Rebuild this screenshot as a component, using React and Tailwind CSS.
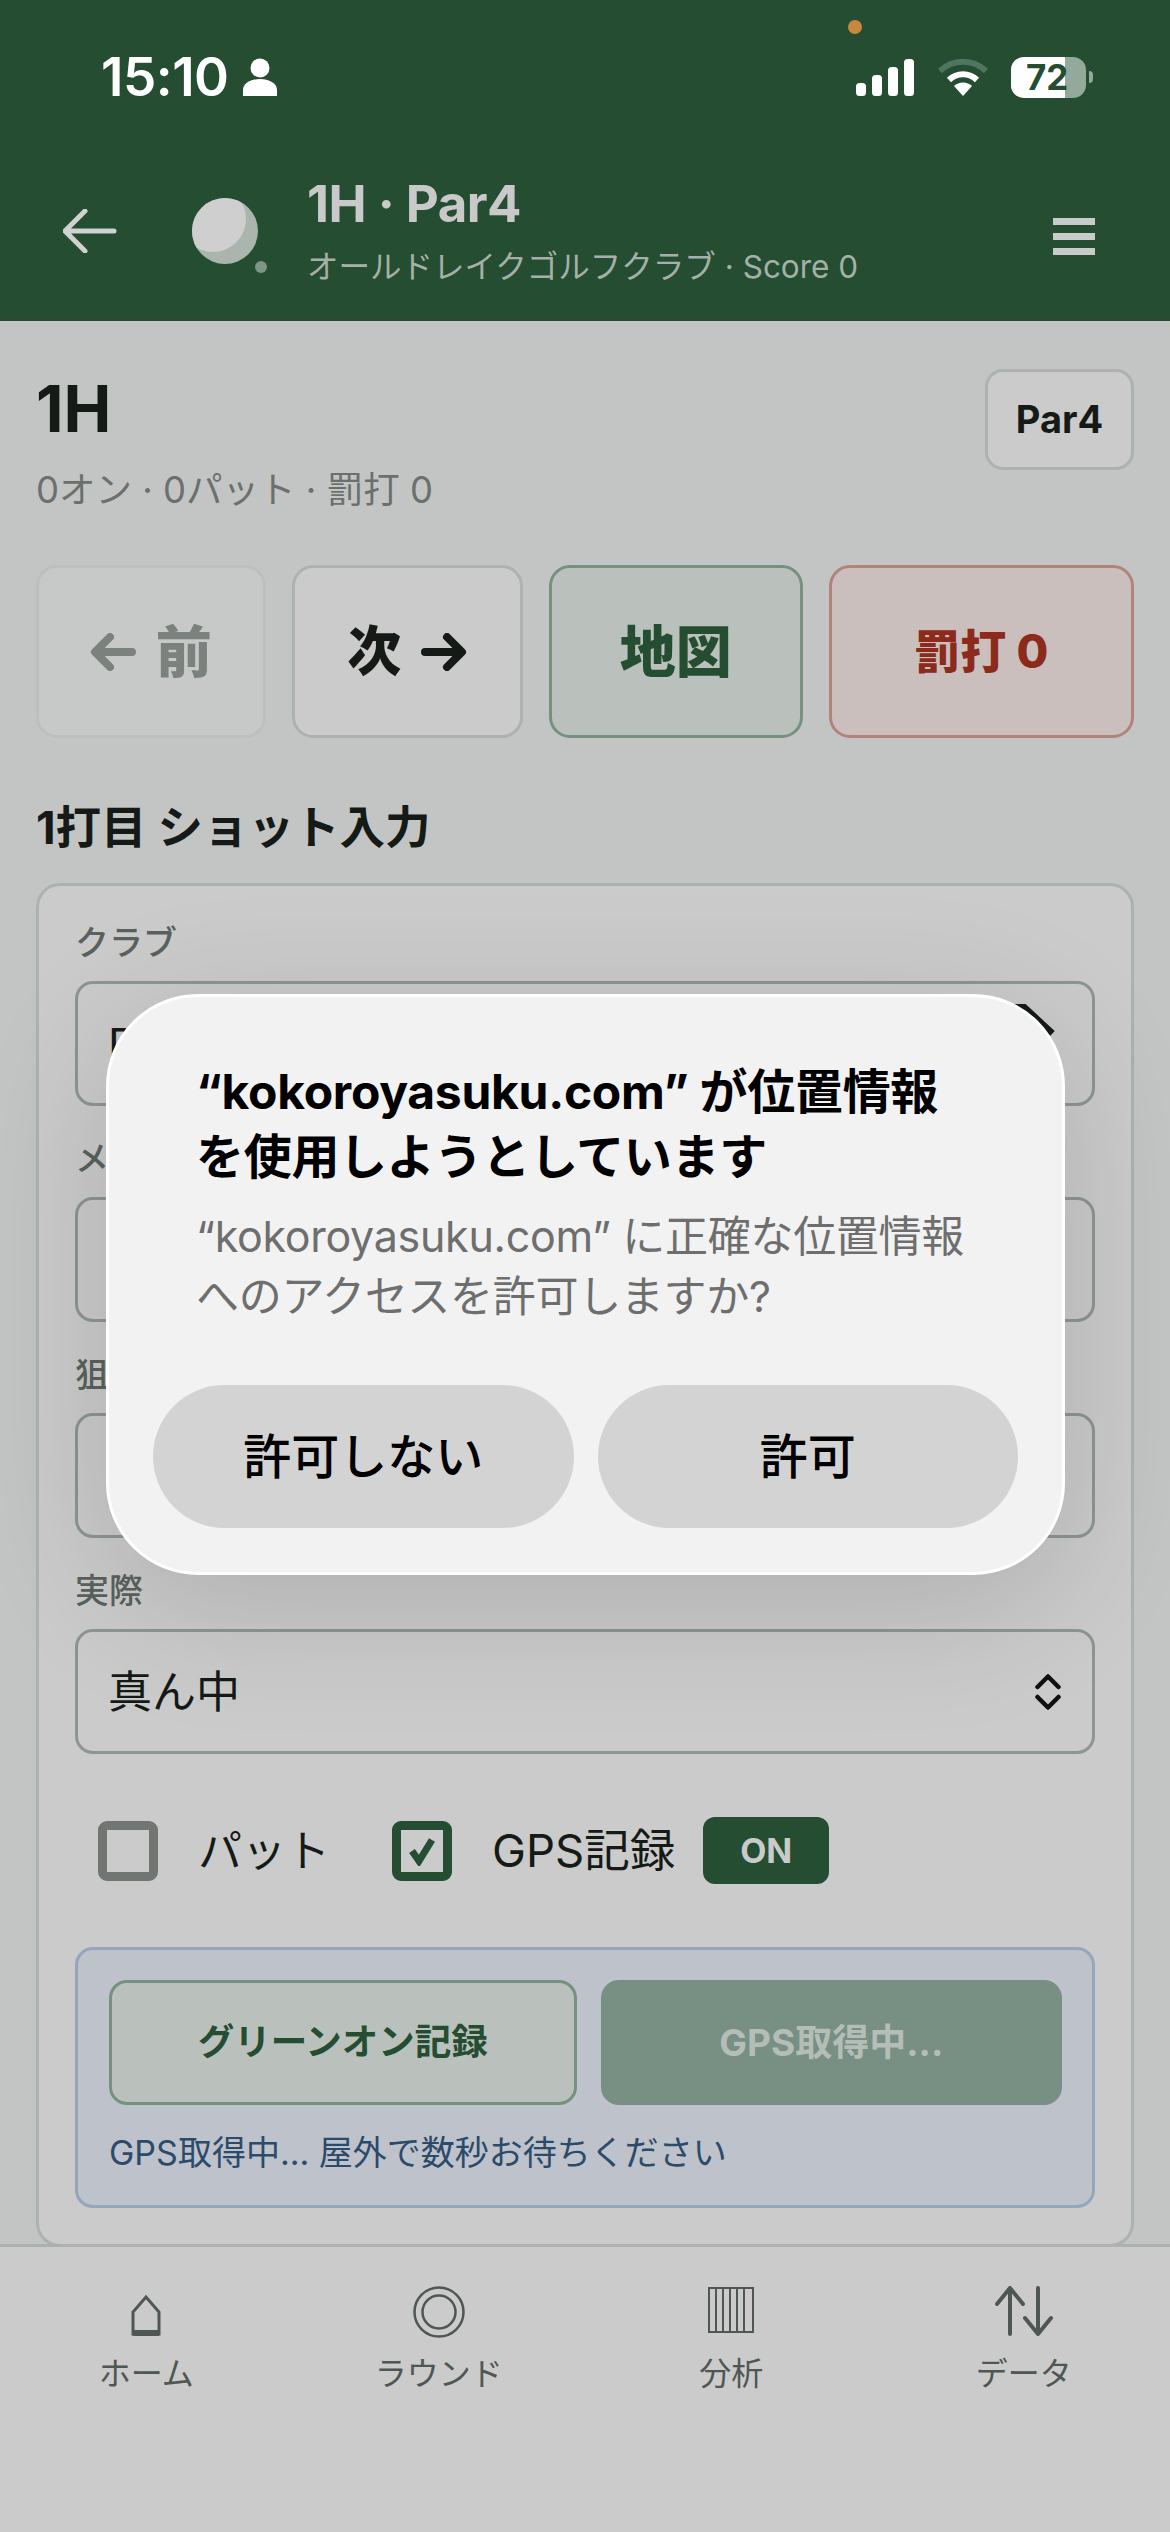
import React from 'react';

const FONT = { fontFamily: 'Inter, "Noto Sans CJK JP", sans-serif' };

function StatusIcons() {
    return (
        <div className="flex items-center">
            <svg width="58" height="37" viewBox="0 0 58 37" className="mr-[23px]">
                <rect x="0" y="24" width="10" height="13" rx="3.5" fill="#fff" />
                <rect x="16" y="16" width="10" height="21" rx="3.5" fill="#fff" />
                <rect x="32" y="8" width="10" height="29" rx="3.5" fill="#fff" />
                <rect x="48" y="0" width="10" height="37" rx="3.5" fill="#fff" />
            </svg>
            <svg width="52" height="38" viewBox="0 0 52 38" className="mr-[22px]">
                <path d="M3 13 A33 33 0 0 1 49 13" fill="none" stroke="#4e7560" strokeWidth="6" />
                <path d="M12 22 A20 20 0 0 1 40 22" fill="none" stroke="#fff" strokeWidth="6" />
                <path d="M26 38 L17 28 A13 13 0 0 1 35 28 Z" fill="#fff" />
            </svg>
            <div className="relative flex h-[41px] w-[75px] items-center overflow-hidden rounded-[13px] bg-[#93a99c]">
                <div className="absolute left-0 top-0 h-full w-[54px] bg-white" />
                <span className="relative ml-[15px] text-[35px] font-bold leading-none text-[#254d32]">72</span>
            </div>
            <div className="ml-[3px] h-[12px] w-[4px] rounded-r-full bg-[#93a99c]" />
        </div>
    );
}

function Header() {
    return (
        <div className="bg-[#254d32] h-[321px] shrink-0 relative">
            <div className="absolute left-[848px] top-[20px] h-[14px] w-[14px] rounded-full bg-[#c8873d]" />
            <div className="flex items-center justify-between pl-[101px] pr-[77px] pt-[46px] h-[108px]">
                <div className="flex items-center text-white">
                    <span className="text-[53px] font-semibold leading-none tracking-[-0.5px]">15:10</span>
                    <svg width="34" height="38" viewBox="0 0 34 38" className="ml-[14px]" fill="#fff">
                        <circle cx="17" cy="10" r="9.5" />
                        <path d="M0 38 V32 C0 25 8 21 17 21 C26 21 34 25 34 32 V38 Z" />
                    </svg>
                </div>
                <StatusIcons />
            </div>
            <div className="flex items-center pl-[63px] pr-[75px] pt-[67px]">
                <svg width="54" height="44" viewBox="0 0 54 44" fill="none" stroke="#d0d2d1" strokeWidth="5" strokeLinecap="round" strokeLinejoin="round">
                    <path d="M51 22 H2 M22 2 L2 22 L22 42" />
                </svg>
                <div className="relative ml-[75px] h-[66px] w-[66px] shrink-0">
                    <div className="h-full w-full rounded-full bg-[#aab5ae] overflow-hidden">
                        <div className="h-[66px] w-[66px] rounded-full bg-[#cfcfcf] -translate-x-[12px] -translate-y-[12px]" />
                    </div>
                    <div className="absolute left-[63px] top-[63px] h-[12px] w-[12px] rounded-full bg-[#7c9586]" />
                </div>
                <div className="ml-[49px] flex-1">
                    <div className="text-[51px] font-bold leading-[58px] text-[#c9c9c9] tracking-[-0.5px]">1H · Par4</div>
                    <div className="mt-[14px] text-[31.5px] leading-[40px] text-[#a4b0a8]">オールドレイクゴルフクラブ · Score 0</div>
                </div>
                <div className="mt-[10px] flex flex-col gap-[8px]">
                    <div className="h-[7px] w-[42px] bg-[#c9cbca]" />
                    <div className="h-[7px] w-[42px] bg-[#c9cbca]" />
                    <div className="h-[7px] w-[42px] bg-[#c9cbca]" />
                </div>
            </div>
        </div>
    );
}

function Chevrons() {
    return (
        <svg width="26" height="38" viewBox="0 0 26 38" fill="none" stroke="#111" strokeWidth="4.5" strokeLinecap="round" strokeLinejoin="round">
            <path d="M2.5 14 L13 3.5 L23.5 14 M2.5 24 L13 34.5 L23.5 24" />
        </svg>
    );
}

// the first select shows one heavy diagonal stroke beside the dialog corner
function BigChevron() {
    return (
        <svg width="80" height="80" viewBox="0 0 80 80" fill="none" stroke="#151a17" strokeWidth="11">
            <path d="M30 -6 L70 31" />
        </svg>
    );
}

function SelectField({ label, value, big }) {
    return (
        <div className="h-[216px] shrink-0">
            <div className="text-[34px] leading-[40px] font-medium text-[#5a625e] mt-[37px]">{label}</div>
            <div className="mt-[18px] h-[125px] rounded-[18px] border-[3px] border-[#8d9792] flex items-center justify-between pl-[30px] pr-[31px]">
                <span className="text-[44px] text-[#151a17]">{value}</span>
                {big ? <BigChevron /> : <Chevrons />}
            </div>
        </div>
    );
}

function Checkbox({ checked }) {
    if (checked) {
        return (
            <div className="h-[60px] w-[60px] rounded-[9px] border-[9px] border-[#254d32] flex items-center justify-center shrink-0">
                <svg width="30" height="30" viewBox="0 0 30 30" fill="none" stroke="#254d32" strokeWidth="7">
                    <path d="M5 15 L12 25 L25 4" />
                </svg>
            </div>
        );
    }
    return <div className="h-[60px] w-[60px] rounded-[9px] border-[9px] border-[#727673] shrink-0" />;
}

function ShotCard() {
    return (
        <div className="h-[1364px] rounded-[24px] border-[3px] border-[#adb2af] bg-[#cbcbcb] px-[36px]">
            <div className="flex flex-col">
                <SelectField label="クラブ" value="Driver" big />
                <SelectField label="メモ" value="なし" />
                <SelectField label="狙い" value="真ん中" />
                <SelectField label="実際" value="真ん中" />
            </div>
            <div className="flex items-center mt-[67px] pl-[23px]">
                <Checkbox />
                <span className="ml-[40px] text-[44px] leading-none text-[#151a17]">パット</span>
                <div className="ml-[62px]"><Checkbox checked /></div>
                <span className="ml-[40px] text-[45.5px] leading-none text-[#151a17]">GPS記録</span>
                <span className="ml-[28px] flex h-[67px] w-[126px] items-center justify-center rounded-[12px] bg-[#254d32] text-[34px] font-bold text-[#c9cbca]">ON</span>
            </div>
            <div className="mt-[63px] h-[261px] rounded-[18px] border-[3px] border-[#93a6bc] bg-[#bdc2cb] pl-[31px] pr-[30px] pt-[30px]">
                <div className="flex gap-[24px]">
                    <div className="flex h-[125px] flex-1 items-center justify-center rounded-[18px] border-[3px] border-[#76917f] bg-[#bac1bc] text-[36.5px] font-bold text-[#254d32]">グリーンオン記録</div>
                    <div className="flex h-[125px] flex-1 items-center justify-center rounded-[18px] bg-[#788f83] text-[37px] font-bold text-[#b4bdb8]">GPS取得中...</div>
                </div>
                <div className="mt-[28px] text-[34px] leading-[40px] text-[#2c4a6a]">GPS取得中... 屋外で数秒お待ちください</div>
            </div>
        </div>
    );
}

function NavArrow({ dir, color }) {
    const d = dir === 'left' ? 'M42 19 H6 M20 4 L5 19 L20 34' : 'M4 19 H40 M26 4 L41 19 L26 34';
    return (
        <svg width="46" height="38" viewBox="0 0 46 38" fill="none" stroke={color} strokeWidth="8" strokeLinecap="round" strokeLinejoin="round">
            <path d={d} />
        </svg>
    );
}

function Main() {
    return (
        <div className="flex-1 overflow-hidden bg-[#c3c5c4] px-[36px] pt-[48px]">
            <div className="flex items-start justify-between">
                <div>
                    <div className="text-[64px] font-bold leading-[48px] mt-[16px] text-[#151a17]">1H</div>
                    <div className="mt-[35px] text-[36.5px] leading-[44px] text-[#6b706d]">0オン · 0パット · 罰打 0</div>
                </div>
                <div className="flex h-[101px] w-[149px] items-center justify-center rounded-[18px] border-[3px] border-[#adb2af] bg-[#cbcbcb] text-[38px] font-bold text-[#151a17]">Par4</div>
            </div>
            <div className="mt-[53px] flex gap-[26px]">
                <div className="flex h-[173px] w-[230px] items-center justify-center gap-[20px] rounded-[21px] border-[3px] border-[#bcc0bd] bg-[#c7c8c8] text-[56px] font-extrabold text-[#7b817d]">
                    <NavArrow dir="left" color="#7b817d" />前
                </div>
                <div className="flex h-[173px] w-[232px] items-center justify-center gap-[20px] rounded-[21px] border-[3px] border-[#adb2af] bg-[#cbcbcb] text-[54px] font-extrabold text-[#151a17]">
                    次<NavArrow dir="right" color="#151a17" />
                </div>
                <div className="flex h-[173px] w-[254px] items-center justify-center rounded-[21px] border-[3px] border-[#76917f] bg-[#bac1bc] text-[56px] font-extrabold text-[#254d32]">地図</div>
                <div className="flex h-[173px] w-[306px] items-center justify-center rounded-[21px] border-[3px] border-[#b0837b] bg-[#cabfbd] text-[46px] font-extrabold text-[#8c2a1c]">罰打 0</div>
            </div>
            <div className="mt-[62px] text-[45.5px] font-bold leading-[56px] text-[#151a17]">1打目 ショット入力</div>
            <div className="mt-[27px]">
                <ShotCard />
            </div>
        </div>
    );
}

function TabIcon({ name }) {
    if (name === 'home') {
        return (
            <svg width="30" height="48" viewBox="0 0 30 48" fill="none" stroke="#4f5753" strokeWidth="3">
                <path d="M2 44 V22 L15 7 L28 22 V44 Z" />
                <path d="M2 43 H28" strokeWidth="6" />
            </svg>
        );
    }
    if (name === 'round') {
        return (
            <svg width="52" height="52" viewBox="0 0 52 52" fill="none" stroke="#4f5753" strokeWidth="2.5">
                <circle cx="26" cy="26" r="24.5" />
                <circle cx="26" cy="26" r="16.5" />
            </svg>
        );
    }
    if (name === 'chart') {
        return (
            <svg width="46" height="46" viewBox="0 0 46 46" fill="none" stroke="#4f5753" strokeWidth="2" className="mb-[5px]">
                <rect x="1" y="1" width="44" height="44" />
                <path d="M8 1 V45 M15 1 V45 M22 1 V45 M29 1 V45 M36 1 V45" />
            </svg>
        );
    }
    return (
        <svg width="60" height="50" viewBox="0 0 60 50" fill="none" stroke="#4f5753" strokeWidth="4" strokeLinecap="round" strokeLinejoin="round" className="mb-[2px]">
            <path d="M16 48 V2 M3 18 L16 2 L29 18" />
            <path d="M44 2 V48 M31 32 L44 48 L57 32" />
        </svg>
    );
}

function TabBar() {
    const tabs = [
        { icon: 'home', label: 'ホーム' },
        { icon: 'round', label: 'ラウンド' },
        { icon: 'chart', label: '分析' },
        { icon: 'data', label: 'データ' },
    ];
    return (
        <div className="h-[288px] shrink-0 border-t-[3px] border-[#adb2ae] bg-[#cbcbcb] grid grid-cols-4 pt-[37px]">
            {tabs.map((t) => (
                <div key={t.label} className="flex flex-col items-center">
                    <div className="flex h-[54px] items-end"><TabIcon name={t.icon} /></div>
                    <div className="mt-[16px] text-[32px] leading-[40px] text-[#4f5753]">{t.label}</div>
                </div>
            ))}
        </div>
    );
}

function Dialog() {
    return (
        <div className="absolute left-[106px] top-[994px] h-[581px] w-[959px] rounded-[92px] border-[3px] border-white bg-[#f2f2f2] shadow-[0_30px_140px_rgba(0,0,0,0.14)] px-[44px]">
            <div className="pl-[43px] pt-[62px] pr-[30px]">
                <div className="text-[48px] font-bold leading-[65px] text-black tracking-[-0.3px]">“kokoroyasuku.com” が位置情報<br />を使用しようとしています</div>
                <div className="mt-[17px] text-[43px] leading-[60px] text-[#6e6e6e] tracking-[-0.3px]">“kokoroyasuku.com” に正確な位置情報<br />へのアクセスを許可しますか?</div>
            </div>
            <div className="mt-[59px] flex gap-[24px]">
                <div className="flex h-[143px] flex-1 items-center justify-center rounded-full bg-[#d3d3d3] text-[48px] font-medium text-black">許可しない</div>
                <div className="flex h-[143px] flex-1 items-center justify-center rounded-full bg-[#d3d3d3] text-[48px] font-medium text-black">許可</div>
            </div>
        </div>
    );
}

export default function App() {
    return (
        <div className="relative flex h-[2532px] w-[1170px] flex-col overflow-hidden" style={FONT}>
            <Header />
            <Main />
            <TabBar />
            <Dialog />
        </div>
    );
}
